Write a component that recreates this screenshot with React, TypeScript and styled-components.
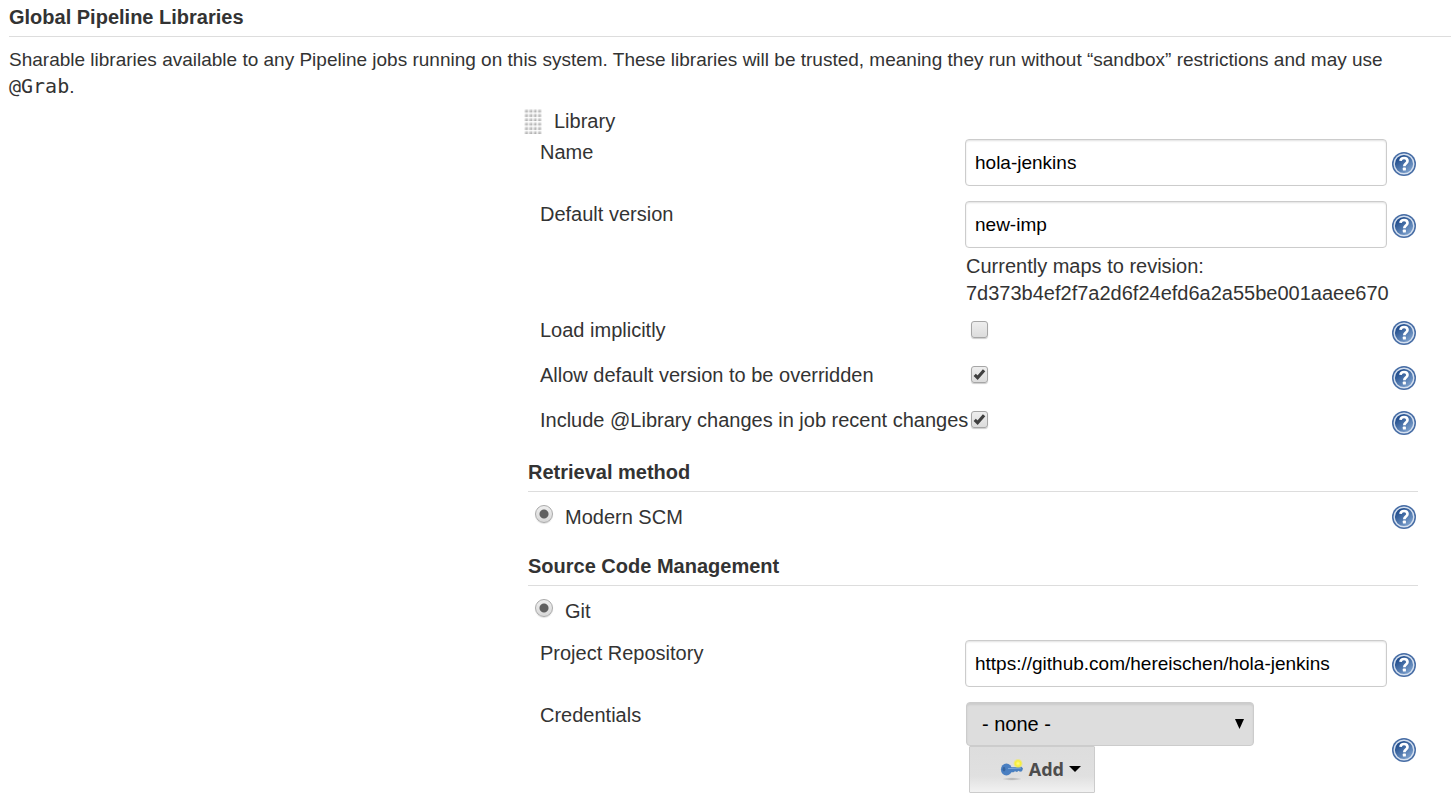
import React from "react";
import styled, { createGlobalStyle } from "styled-components";

const Global = createGlobalStyle`
  *, *::before, *::after { box-sizing: border-box; }
  body { margin: 0; background: #fff; color: #333; font-family: "Liberation Sans", Arial, sans-serif; font-size: 20px; line-height: 27px; }
`;

const Page = styled.main`padding: 4px 0 0 9px;`;
const Heading = styled.h2`
  margin: 0; height: 33px; font-size: 20px; line-height: 27px; font-weight: 700;
  border-bottom: 1px solid #ddd;
`;
const Description = styled.p`margin: 9px 0 8px; font-size: 19px;`;
const Code = styled.code`font-family: "DejaVu Sans Mono", monospace; font-size: 20px; line-height: 20px;`;
const LibraryBlock = styled.form`margin: 0 33px 0 519px;`;
const LibraryTitle = styled.div`display: flex; align-items: flex-start; height: 31px; gap: 12px; margin-left: -4px;`;
const Row = styled.div<{ $height: number }>`
  display: grid; grid-template-columns: 437px minmax(0, 1fr) 26px;
  align-items: start; min-height: ${(p) => p.$height}px;
`;
const Label = styled.label`padding-left: 12px; white-space: nowrap;`;
const Control = styled.div`padding-right: 5px;`;
const TextInput = styled.input`
  display: block; width: 100%; height: 47px; padding: 0 9px; border: 1px solid #ccc; border-radius: 4px;
  background: #fff; color: #000; font: 19px "Liberation Sans", Arial, sans-serif;
  box-shadow: inset 0 1px 2px rgba(0, 0, 0, 0.12);
`;
const Revision = styled.div`padding: 5px 0 0 1px;`;
const Help = styled.button<{ $top: number }>`
  display: block; width: 24px; height: 24px; margin: ${(p) => p.$top}px 0 0 0; padding: 0; border: 0; background: none;
  svg { display: block; }
`;
const Check = styled.input`
  appearance: none; display: block; width: 17px; height: 17px; margin: 4px 0 0 6px;
  border: 1px solid #a6a6a6; border-radius: 3px; background: linear-gradient(#eee, #dcdcdc);
  box-shadow: 0 1px 1px rgba(0, 0, 0, 0.2);
  &:checked {
    background: url("data:image/svg+xml,%3Csvg xmlns='http://www.w3.org/2000/svg' viewBox='0 0 15 15'%3E%3Cpath d='M2.700 7.800 5.600 10.700 12.100 3.200' fill='none' stroke='%23404040' stroke-width='3.200'/%3E%3C/svg%3E"), linear-gradient(#eee, #dcdcdc);
  }
`;
const Settings = styled.div`margin-bottom: 7px;`;
const RadioRow = styled.div<{ $height: number }>`
  display: flex; align-items: flex-start; height: ${(p) => p.$height}px; padding: 12px 2px 0 7px;
`;
const Radio = styled.input`
  appearance: none; width: 18px; height: 18px; margin: 1px 12px 0 0; border: 1px solid #aaa; border-radius: 50%;
  background: radial-gradient(circle, #606060 0 4px, transparent 5px), linear-gradient(#eee, #d8d8d8);
  box-shadow: 0 1px 1px rgba(0, 0, 0, 0.12);
`;
const RadioLabel = styled.label`flex: 1;`;
const SelectWrap = styled.div`
  position: relative; width: 288px; margin-left: 1px;
  svg { position: absolute; right: 10px; top: 17px; pointer-events: none; }
`;
const Select = styled.select`
  appearance: none; display: block; width: 100%; height: 44px; padding: 0 15px; border: 1px solid #ccc; border-radius: 4px;
  background: #ddd; color: #000; font: 20px "Liberation Sans", Arial, sans-serif;
  box-shadow: inset 0 2px 2px rgba(0, 0, 0, 0.08);
`;
const AddButton = styled.button`
  display: flex; align-items: center; justify-content: flex-end; width: 126px; height: 47px; margin-left: 4px; padding: 0 13px 2px 0;
  border: 1px solid #ccc; border-radius: 1px; background: linear-gradient(#ddd 0%, #e0e0e0 65%, #f2f2f2 100%);
  color: #4d4d4d; font: 700 18px "Noto Sans", sans-serif; gap: 5px;
`;

function HelpIcon({ top, topic }: { top: number; topic: string }) {
  return (
    <Help type="button" $top={top} aria-label={`Help for feature: ${topic}`}>
      <svg width="24" height="24" viewBox="0 0 24 24">
        <defs>
          <linearGradient id="helpFill" x1="0.1" y1="0" x2="0.9" y2="1">
            <stop offset="0.2" stopColor="#24508f" /><stop offset="1" stopColor="#8dafd8" />
          </linearGradient>
        </defs>
        <circle cx="12" cy="12" r="12" fill="#476da5" />
        <circle cx="12" cy="12" r="9.800" fill="url(#helpFill)" stroke="#d5e0ef" strokeWidth="1.400" />
        <path d="M8.500 8.900C8.700 7 10.100 6 12 6c2.100 0 3.500 1.100 3.500 3 0 2.500-3.200 2.700-3.200 5.300" fill="none" stroke="#fff" strokeWidth="2.700" />
        <rect x="10.800" y="15.600" width="3.100" height="3" rx="0.700" fill="#fff" />
      </svg>
    </Help>
  );
}

function DragHandle() {
  return (
    <svg width="18" height="27" viewBox="0 0 18 27" aria-hidden="true">
      <defs>
        <linearGradient id="gripDot" x1="0" y1="0" x2="1" y2="1">
          <stop offset="0" stopColor="#f2f2f2" /><stop offset="0.500" stopColor="#ccc" /><stop offset="1" stopColor="#8e8e8e" />
        </linearGradient>
        <pattern id="grip" y="1" width="4.333" height="4.333" patternUnits="userSpaceOnUse">
          <rect x="0.500" y="0.300" width="3.300" height="3.100" fill="url(#gripDot)" />
        </pattern>
      </defs>
      <rect y="1" width="18" height="25" fill="url(#grip)" />
    </svg>
  );
}

function KeyIcon() {
  return (
    <svg width="24" height="24" viewBox="0 0 24 24" aria-hidden="true">
      <defs>
        <radialGradient id="spark">
          <stop offset="0" stopColor="#fffb8a" /><stop offset="0.550" stopColor="#f7ee38" /><stop offset="1" stopColor="#f7ee38" stopOpacity="0" />
        </radialGradient>
        <radialGradient id="shade">
          <stop offset="0" stopColor="#aaa" /><stop offset="1" stopColor="#aaa" stopOpacity="0" />
        </radialGradient>
      </defs>
      <ellipse cx="12" cy="22" rx="10" ry="1.700" fill="url(#shade)" />
      <path d="M10 10.300 21.500 9.700 23 11.500 22 14.200 20 14.800 18.500 13.800 17 15 15 14.200 13.500 15.200 10 15.300Z" fill="#4a80c0" />
      <ellipse cx="6.400" cy="12.500" rx="5.500" ry="5.900" fill="#4a7fc1" />
      <ellipse cx="4" cy="12.300" rx="1.400" ry="2.200" fill="#37659f" />
      <path d="M8 11.600 21 11" stroke="#82aadb" strokeWidth="1" />
      <circle cx="18" cy="6.500" r="5" fill="url(#spark)" />
    </svg>
  );
}

export default function App() {
  return (
    <>
      <Global />
      <Page>
        <Heading>Global Pipeline Libraries</Heading>
        <Description>
          Sharable libraries available to any Pipeline jobs running on this system. These libraries will be trusted, meaning they run without “sandbox” restrictions and may use <Code>@Grab</Code>.
        </Description>
        <LibraryBlock>
          <LibraryTitle><DragHandle />Library</LibraryTitle>
          <Settings>
            <Row $height={62}>
              <Label htmlFor="name">Name</Label>
              <Control><TextInput id="name" defaultValue="hola-jenkins" /></Control>
              <HelpIcon top={13} topic="Name" />
            </Row>
            <Row $height={116}>
              <Label htmlFor="version">Default version</Label>
              <Control>
                <TextInput id="version" defaultValue="new-imp" />
                <Revision>Currently maps to revision: 7d373b4ef2f7a2d6f24efd6a2a55be001aaee670</Revision>
              </Control>
              <HelpIcon top={13} topic="Default version" />
            </Row>
            <Row $height={45}>
              <Label htmlFor="implicit">Load implicitly</Label>
              <Control><Check type="checkbox" id="implicit" /></Control>
              <HelpIcon top={4} topic="Load implicitly" />
            </Row>
            <Row $height={45}>
              <Label htmlFor="override">Allow default version to be overridden</Label>
              <Control><Check type="checkbox" id="override" defaultChecked /></Control>
              <HelpIcon top={4} topic="Allow default version to be overridden" />
            </Row>
            <Row $height={45}>
              <Label htmlFor="changes">Include @Library changes in job recent changes</Label>
              <Control><Check type="checkbox" id="changes" defaultChecked /></Control>
              <HelpIcon top={4} topic="Include @Library changes" />
            </Row>
          </Settings>
          <section>
            <Heading>Retrieval method</Heading>
            <RadioRow $height={61}>
              <Radio type="radio" id="modern" name="retriever" defaultChecked />
              <RadioLabel htmlFor="modern">Modern SCM</RadioLabel>
              <HelpIcon top={1} topic="Modern SCM" />
            </RadioRow>
          </section>
          <section>
            <Heading>Source Code Management</Heading>
            <RadioRow $height={54}>
              <Radio type="radio" id="git" name="scm" defaultChecked />
              <RadioLabel htmlFor="git">Git</RadioLabel>
            </RadioRow>
            <Row $height={62}>
              <Label htmlFor="repo">Project Repository</Label>
              <Control><TextInput id="repo" defaultValue="https://github.com/hereischen/hola-jenkins" /></Control>
              <HelpIcon top={13} topic="Project Repository" />
            </Row>
            <Row $height={91}>
              <Label htmlFor="credentials">Credentials</Label>
              <Control>
                <SelectWrap>
                  <Select id="credentials"><option>- none -</option></Select>
                  <svg width="9" height="10" viewBox="0 0 9 10" aria-hidden="true"><path d="M0 0H9L4.500 10Z" fill="#000" /></svg>
                </SelectWrap>
                <AddButton type="button">
                  <KeyIcon />Add
                  <svg width="12" height="6" viewBox="0 0 12 6" aria-hidden="true"><path d="M0 0H12L6 6Z" fill="#000" /></svg>
                </AddButton>
              </Control>
              <HelpIcon top={36} topic="Credentials" />
            </Row>
          </section>
        </LibraryBlock>
      </Page>
    </>
  );
}
